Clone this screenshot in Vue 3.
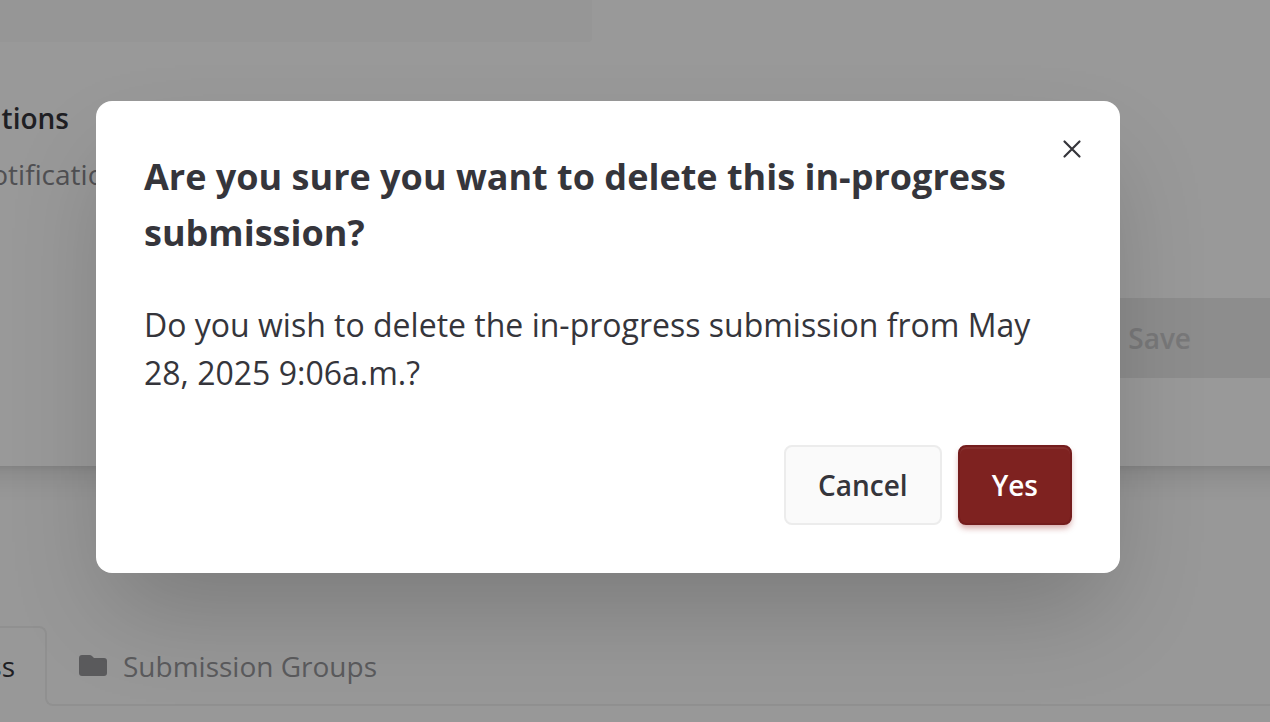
<script setup>
const tabs = [
  { label: 'In Progress', active: true },
  { label: 'Submission Groups', active: false },
]
</script>

<template>
  <div class="page">
    <main class="content">
      <section class="panel">
        <div class="field"></div>
        <div class="setting">
          <h2><span>Notifications</span></h2>
          <p><span>Notifications</span></p>
        </div>
        <button type="button" class="save" disabled>Save</button>
      </section>
      <nav class="tabs" aria-label="Submissions">
        <button
          v-for="tab in tabs"
          :key="tab.label"
          type="button"
          :class="['tab', { active: tab.active }]"
        >
          <svg v-if="!tab.active" viewBox="0 0 28 22" width="28" height="22" aria-hidden="true">
            <path d="M3 0H10.500Q12 0 13 1L15 3H25Q28 3 28 6V18Q28 21 25 21H3Q0 21 0 18V3Q0 0 3 0Z" fill="currentColor" />
          </svg>
          <span>{{ tab.label }}</span>
        </button>
      </nav>
    </main>

    <div class="overlay">
      <div class="dialog" role="dialog" aria-modal="true" aria-labelledby="dialog-title">
        <button type="button" class="close" aria-label="Close">
          <svg viewBox="0 0 20 20" width="20" height="20" aria-hidden="true">
            <path d="M2.500 2.500L17.500 17.500M17.500 2.500L2.500 17.500" stroke="currentColor" stroke-width="2.200" stroke-linecap="round" />
          </svg>
        </button>
        <h1 id="dialog-title">Are you sure you want to delete this in-progress submission?</h1>
        <p class="message">Do you wish to delete the in-progress submission from May 28, 2025 9:06a.m.?</p>
        <div class="actions">
          <button type="button" class="btn cancel">Cancel</button>
          <button type="button" class="btn yes">Yes</button>
        </div>
      </div>
    </div>
  </div>
</template>

<style>
body {
  background: #ffffff;
}
</style>

<style scoped>
* {
  box-sizing: border-box;
}
.page {
  position: relative;
  min-height: 100vh;
  overflow: hidden;
  background: #fefefe;
  color: #35353b;
  font-family: "Open Sans", "Noto Sans", sans-serif;
  font-size: 28px;
}
h1, h2, p {
  margin: 0;
}
button {
  font: inherit;
}
.content {
  display: flex;
  flex-direction: column;
  gap: 160px;
}
.panel {
  margin: 0 -40px;
  padding: 0 40px 88px;
  background: #ffffff;
  box-shadow: 0 8px 32px rgba(0, 0, 0, 0.14), 0 2px 6px rgba(0, 0, 0, 0.06);
}
.field {
  width: 592px;
  height: 42px;
  background: #fafafa;
  border-bottom-right-radius: 4px;
}
.setting {
  display: flex;
  flex-direction: column;
  gap: 16px;
  padding: 56px 0 104px;
}
.setting h2,
.setting p {
  display: flex;
  justify-content: flex-end;
  overflow: hidden;
  font-size: 28px;
  line-height: 40px;
}
.setting h2 {
  width: 69px;
  font-weight: 600;
}
.setting p {
  width: 135px;
  color: #85858a;
}
.save {
  display: block;
  width: 50%;
  height: 80px;
  margin-left: auto;
  padding: 0 79px;
  border: 0;
  background: #ebebeb;
  color: #c8c8ca;
  font-weight: 600;
  text-align: right;
}
.tabs {
  display: flex;
  height: 96px;
}
.tab {
  position: relative;
  display: flex;
  flex: 1;
  align-items: center;
  gap: 16px;
  height: 80px;
  padding: 0 32px;
  border: 0;
  background: none;
  color: #98989c;
}
.tab.active {
  flex: none;
  width: 47px;
  padding-left: 0;
  justify-content: flex-end;
  overflow: hidden;
  white-space: nowrap;
  color: #35353b;
}
/* Each tab draws half of the S-shaped divider between them. */
.tab::before {
  position: absolute;
  right: 0;
  height: 50%;
  border: 0 solid #f0f0f0;
  content: "";
}
.tab.active::before {
  top: 0;
  left: 0;
  border-width: 2px 2px 0 0;
  border-top-right-radius: 8px;
}
.tab:not(.active)::before {
  bottom: 0;
  left: -2px;
  border-width: 0 0 2px 2px;
  border-bottom-left-radius: 8px;
}
.overlay {
  position: absolute;
  inset: 0;
  padding: 101px 150px 149px 96px;
  background: rgba(0, 0, 0, 0.4);
}
.dialog {
  position: relative;
  padding: 48px;
  border-radius: 16px;
  background: #ffffff;
  box-shadow: 0 48px 96px -16px rgba(0, 0, 0, 0.2);
}
.close {
  position: absolute;
  top: 32px;
  right: 32px;
  display: grid;
  place-items: center;
  width: 32px;
  height: 32px;
  padding: 0;
  border: 0;
  background: none;
  color: #35353b;
}
h1 {
  font-size: 36px;
  font-weight: 700;
  line-height: 56px;
}
.message {
  margin-top: 40px;
  font-size: 32px;
  line-height: 48px;
}
.actions {
  display: flex;
  justify-content: flex-end;
  gap: 16px;
  margin-top: 48px;
}
.btn {
  height: 80px;
  padding: 0 32px;
  border: 2px solid #ececec;
  border-radius: 8px;
  background: #fafafa;
  color: #35353b;
  font-weight: 600;
}
.yes {
  border-color: #741d1d;
  background: #7e2220;
  color: #ffffff;
  box-shadow: 0 4px 6px -1px rgba(150, 34, 32, 0.4), inset 0 2px 0 rgba(255, 255, 255, 0.06);
}
</style>
